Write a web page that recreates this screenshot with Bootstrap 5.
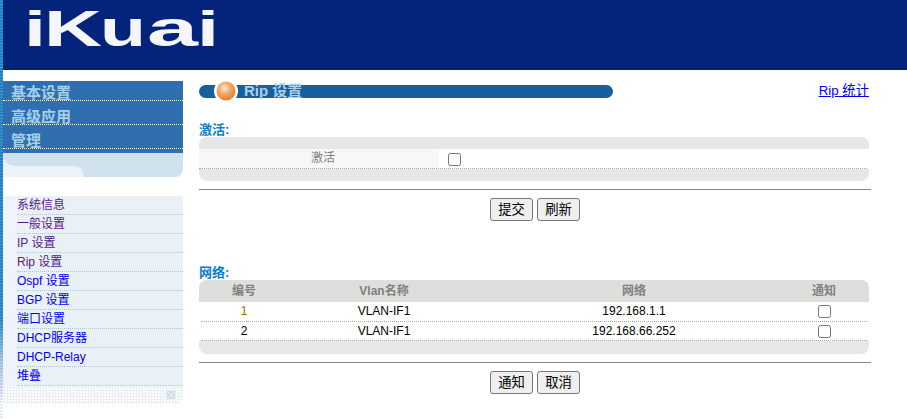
<!DOCTYPE html>
<html lang="zh"><head><meta charset="utf-8"><title>Rip 设置</title>
<link href="https://cdn.jsdelivr.net/npm/bootstrap@5.3.0/dist/css/bootstrap.min.css" rel="stylesheet">
<style>
html,body{height:100%;overflow:hidden}
body{font-family:"Liberation Sans","Noto Sans CJK SC",sans-serif;font-size:12px;line-height:1.2;background:#fff;color:#000}
.ik-page{height:419px}
.ik-strip{width:3px;flex:none;background:repeating-linear-gradient(0deg,rgba(255,255,255,.14) 0 1px,rgba(0,60,120,.1) 1px 3px),linear-gradient(180deg,#2286c6 0,#2a8ac8 76%,#a5cbe8 86%,#e4e4f8 93%,#fff 96%)}
.ik-top{height:70px;background:#04247b}
.ik-logo{display:block;width:230px;height:70px}
.ik-logo text{font-family:"Liberation Sans",sans-serif;font-weight:700;font-size:50px;fill:#f4f6fb}
.ik-side{width:180px;flex:none;padding-top:11px}
.ik-menu{background:#2f6fb0;padding-bottom:4px}
.ik-menu div{height:24px;display:flex;align-items:flex-end;padding-left:8px;font-size:15px;line-height:14px;font-weight:700;color:#a6cfe9;border-bottom:1px dotted #fff;box-sizing:border-box}
.ik-menu div:first-child{height:20px}
.ik-band{height:24px;background:#d0e1ee;border-radius:0 0 8px 0;overflow:hidden}
.ik-band svg{display:block;width:84px;height:24px}
.ik-list{margin-top:19px;background:#eef4f9}
.ik-list a{display:block;height:19px;margin-left:14px;padding-top:2px;line-height:14px;font-size:12px;text-decoration:none;color:#00e;background:#e9f0f6;border-bottom:1px dotted #a8c6d6;border-top-right-radius:7px;box-sizing:border-box}
.ik-list a.ik-seen{color:#551a8b}
.ik-foot{height:18px;background-color:#fff;background-image:radial-gradient(#e8eff5 1px,transparent 1.2px);background-size:3px 3px;border-bottom-right-radius:7px;display:flex;justify-content:flex-end;align-items:center;padding-right:8px}
.ik-main{width:672px;margin-left:16px;padding-top:14px}
.ik-titlebar{height:13px;width:414px;background:#17609f;border-radius:7px;padding-left:15px;gap:6px}
.ik-title{font-size:15px;font-weight:700;color:#a9cfe8;line-height:13px;white-space:nowrap;margin-top:-2px}
.ik-ball{width:24px;height:24px;flex:none;margin:-6px 0}
.ik-stat{font-size:13.33px;line-height:14px;color:#00e;margin-right:2px}
.ik-headline{width:672px}
.ik-label{color:#0a7dc4;font-weight:700;font-size:13px;line-height:14px}
.ik-lab1{margin-top:25px}
.ik-panel{width:670px;background:#e7e7e7;border-radius:8px;overflow:hidden}
.ik-gap12{height:12px}
.ik-gap13{height:13px}
.ik-r1{height:20px;background:#fff;box-sizing:border-box;position:relative}
.ik-r1::after,.ik-row::after{content:"";position:absolute;left:0;right:2px;bottom:0;border-bottom:1px dotted #aaa}
.ik-name{width:240px;padding-left:8px;background:#f7f7f7;color:#808080;text-align:center;line-height:18px}
.ik-cell{padding-left:9px}
.ik-cb{appearance:none;-webkit-appearance:none;display:block;width:13px;height:13px;margin:0;background:#fff;border:1px solid #767676;border-radius:2.5px}
.ik-rule{width:672px;height:1px;background:#888;border:0;margin:8px 0 0;opacity:1}
.ik-acts{margin-top:8px;width:672px}
.ik-btn{height:23px;padding:0 6px;font-size:13.33px;line-height:21px;color:#000;background:#efefef;border:1px solid #767676;border-radius:3px;width:43px;white-space:nowrap}
.ik-net{margin-top:45px}
.ik-gridrow{display:grid;grid-template-columns:90px 190px 310px 70px 10px;text-align:center;align-items:center}
.ik-head{height:22px;background:#dededc;color:#808080;font-weight:700}
.ik-rows{background:#fff}
.ik-row{height:20px;box-sizing:border-box;position:relative;padding-bottom:1px}
.ik-row::after{left:2px}
.ik-row:last-child{height:19px;padding-bottom:0}
.ik-row .ik-cb{margin:0 auto}
.ik-amber{color:#a86800}
</style></head>
<body>
<div class="ik-page d-flex">
  <div class="ik-strip"></div>
  <div class="flex-grow-1">
    <div class="ik-top">
      <svg class="ik-logo" viewBox="0 0 230 70" role="img" aria-label="iKuai"><text x="21" y="46" textLength="22" lengthAdjust="spacingAndGlyphs">i</text><text x="41" y="46" textLength="58" lengthAdjust="spacingAndGlyphs">K</text><text x="97" y="46" textLength="46" lengthAdjust="spacingAndGlyphs">u</text><text x="144" y="46" textLength="51" lengthAdjust="spacingAndGlyphs">a</text><text x="194" y="46" textLength="22" lengthAdjust="spacingAndGlyphs">i</text></svg>
    </div>
    <div class="d-flex">
      <div class="ik-side">
        <div class="ik-menu"><div>基本设置</div><div>高级应用</div><div>管理</div></div>
        <div class="ik-band"><svg viewBox="0 0 84 24" aria-hidden="true"><path d="M0 4Q3 13 14 13H72Q80 13 81 24H0Z" fill="#ebf2f8"/></svg></div>
        <div class="ik-list">
          <a class="ik-seen" href="#">系统信息</a>
          <a class="ik-seen" href="#">一般设置</a>
          <a class="ik-seen" href="#">IP 设置</a>
          <a class="ik-seen" href="#">Rip 设置</a>
          <a href="#">Ospf 设置</a>
          <a href="#">BGP 设置</a>
          <a href="#">端口设置</a>
          <a href="#">DHCP服务器</a>
          <a href="#">DHCP-Relay</a>
          <a href="#">堆叠</a>
        </div>
        <div class="ik-foot"><svg width="8" height="8" viewBox="0 0 8 8" aria-hidden="true"><rect width="8" height="8" fill="#cfdde8"/><path d="M1 1l6 6M7 1l-6 6" stroke="#f2f6fa" fill="none"/></svg></div>
      </div>
      <div class="ik-main">
        <div class="ik-headline d-flex justify-content-between align-items-center">
          <div class="ik-titlebar d-flex align-items-center">
            <svg class="ik-ball" viewBox="0 0 24 24" aria-hidden="true"><defs><radialGradient id="ikb" cx=".42" cy=".35" r=".7"><stop offset="0" stop-color="#fbe6d2"/><stop offset=".45" stop-color="#f2a868"/><stop offset="1" stop-color="#e0761f"/></radialGradient></defs><circle cx="12" cy="12" r="12" fill="#fff"/><circle cx="12" cy="12" r="9.5" fill="url(#ikb)"/></svg>
            <span class="ik-title">Rip 设置</span>
          </div>
          <a class="ik-stat" href="#">Rip 统计</a>
        </div>
        <div class="ik-label ik-lab1">激活:</div>
        <div class="ik-panel">
          <div class="ik-gap12"></div>
          <div class="ik-r1 d-flex"><div class="ik-name">激活</div><div class="ik-cell d-flex align-items-center"><input class="ik-cb" type="checkbox" aria-label="激活"></div></div>
          <div class="ik-gap12"></div>
        </div>
        <hr class="ik-rule">
        <div class="d-flex justify-content-center gap-1 ik-acts"><button class="ik-btn" type="button">提交</button><button class="ik-btn" type="button">刷新</button></div>
        <div class="ik-label ik-net">网络:</div>
        <div class="ik-panel">
          <div class="ik-gridrow ik-head"><span>编号</span><span>Vlan名称</span><span>网络</span><span>通知</span><span></span></div>
          <div class="ik-rows">
            <div class="ik-gridrow ik-row"><span class="ik-amber">1</span><span>VLAN-IF1</span><span>192.168.1.1</span><input class="ik-cb" type="checkbox" aria-label="通知"><span></span></div>
            <div class="ik-gridrow ik-row"><span>2</span><span>VLAN-IF1</span><span>192.168.66.252</span><input class="ik-cb" type="checkbox" aria-label="通知"><span></span></div>
          </div>
          <div class="ik-gap13"></div>
        </div>
        <hr class="ik-rule">
        <div class="d-flex justify-content-center gap-1 ik-acts"><button class="ik-btn" type="button">通知</button><button class="ik-btn" type="button">取消</button></div>
      </div>
    </div>
  </div>
</div>
</body></html>
